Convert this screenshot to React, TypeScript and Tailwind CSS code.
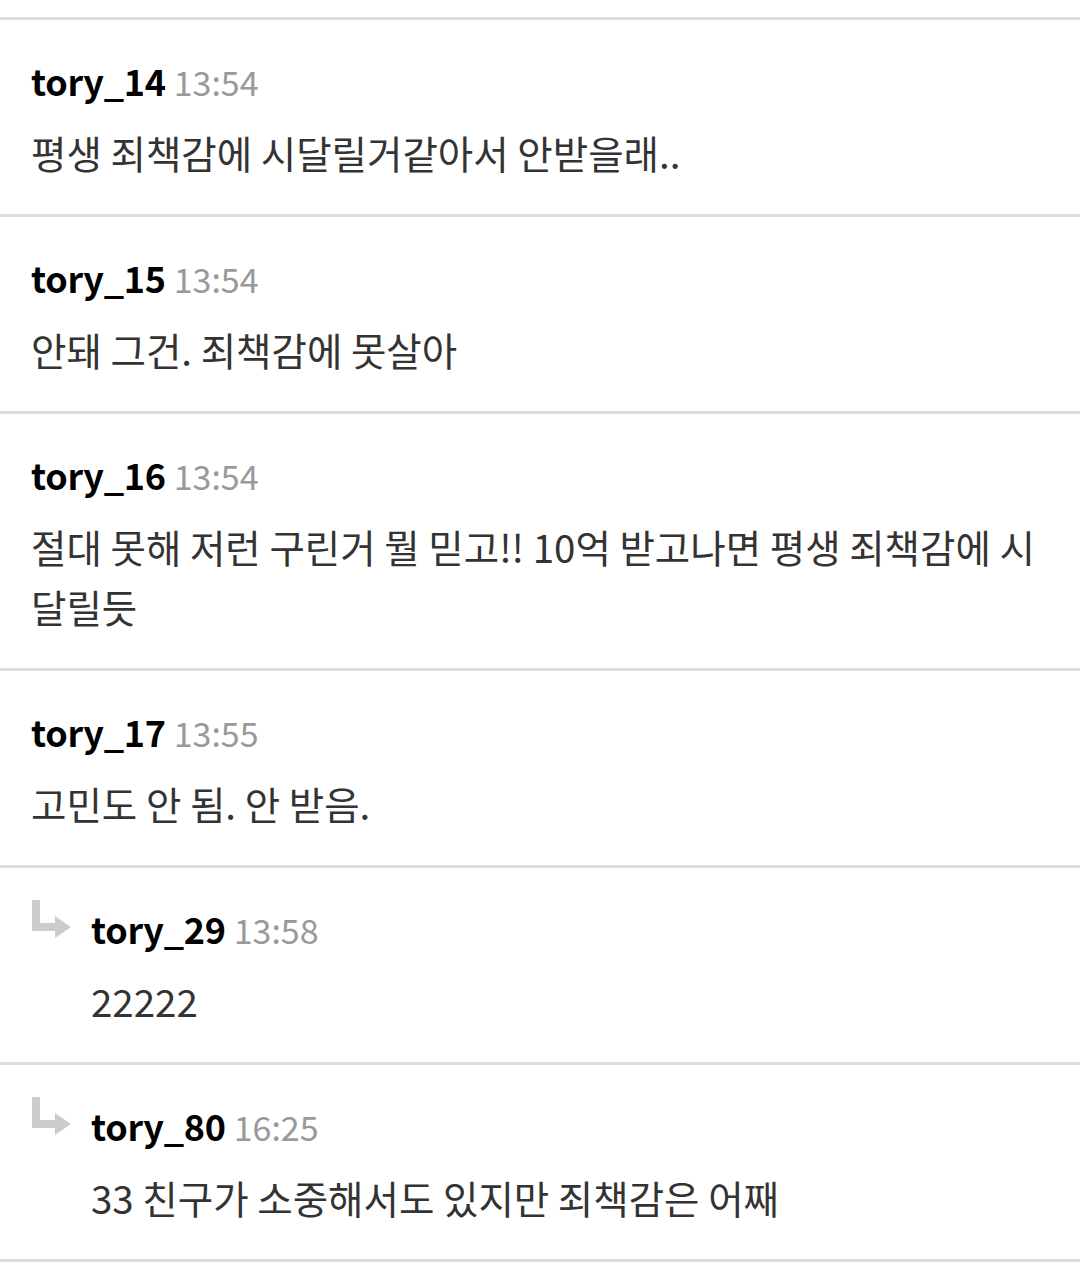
type Comment = {
    name: string;
    time: string;
    text: string;
    reply?: boolean;
}

const comments: Comment[] = [
    { name: "tory_14", time: "13:54", text: "평생 죄책감에 시달릴거같아서 안받을래.." },
    { name: "tory_15", time: "13:54", text: "안돼 그건. 죄책감에 못살아" },
    { name: "tory_16", time: "13:54", text: "절대 못해 저런 구린거 뭘 믿고!! 10억 받고나면 평생 죄책감에 시달릴듯" },
    { name: "tory_17", time: "13:55", text: "고민도 안 됨. 안 받음." },
    { name: "tory_29", time: "13:58", text: "22222", reply: true },
    { name: "tory_80", time: "16:25", text: "33 친구가 소중해서도 있지만 죄책감은 어째", reply: true },
]

const ReplyArrow = () => (
    <svg width="40" height="38" viewBox="0 0 40 38" className="shrink-0">
        <path d="M0 0 H8 V23 H23 V16 L39 27 L23 38 V31 H0 Z" fill="#cccccc" />
    </svg>
)

const CommentItem = ({ comment }: { comment: Comment }) => {
    return (
        <div className={`border-t-[3px] border-[#dddddd] pt-[32px] pb-[32px] pr-[30px] ${comment.reply ? "pl-[32px] flex gap-[19px]" : "pl-[31px]"}`}>
            {comment.reply && <ReplyArrow />}
            <div className="flex-1 min-w-0">
                <div className="mt-[2px] flex items-baseline gap-[8px] leading-[52px] h-[52px]">
                    <span className="text-[36px] font-bold text-black tracking-[-0.3px]">{comment.name}</span>
                    <span className="text-[34px] text-[#999999]">{comment.time}</span>
                </div>
                <p className="mt-[16px] text-[38.5px] leading-[60px] text-[#333333]">{comment.text}</p>
            </div>
        </div>
    )
}

const App = () => {
    return (
        <div className="w-[1080px] min-h-[1279px] bg-white pt-[17px]" style={{ fontFamily: '"Noto Sans CJK KR", "Noto Sans", sans-serif' }}>
            {comments.map((c, i) => (
                <CommentItem key={i} comment={c} />
            ))}
            <div className="border-t-[3px] border-[#dddddd]" />
        </div>
    )
}

export default App;
